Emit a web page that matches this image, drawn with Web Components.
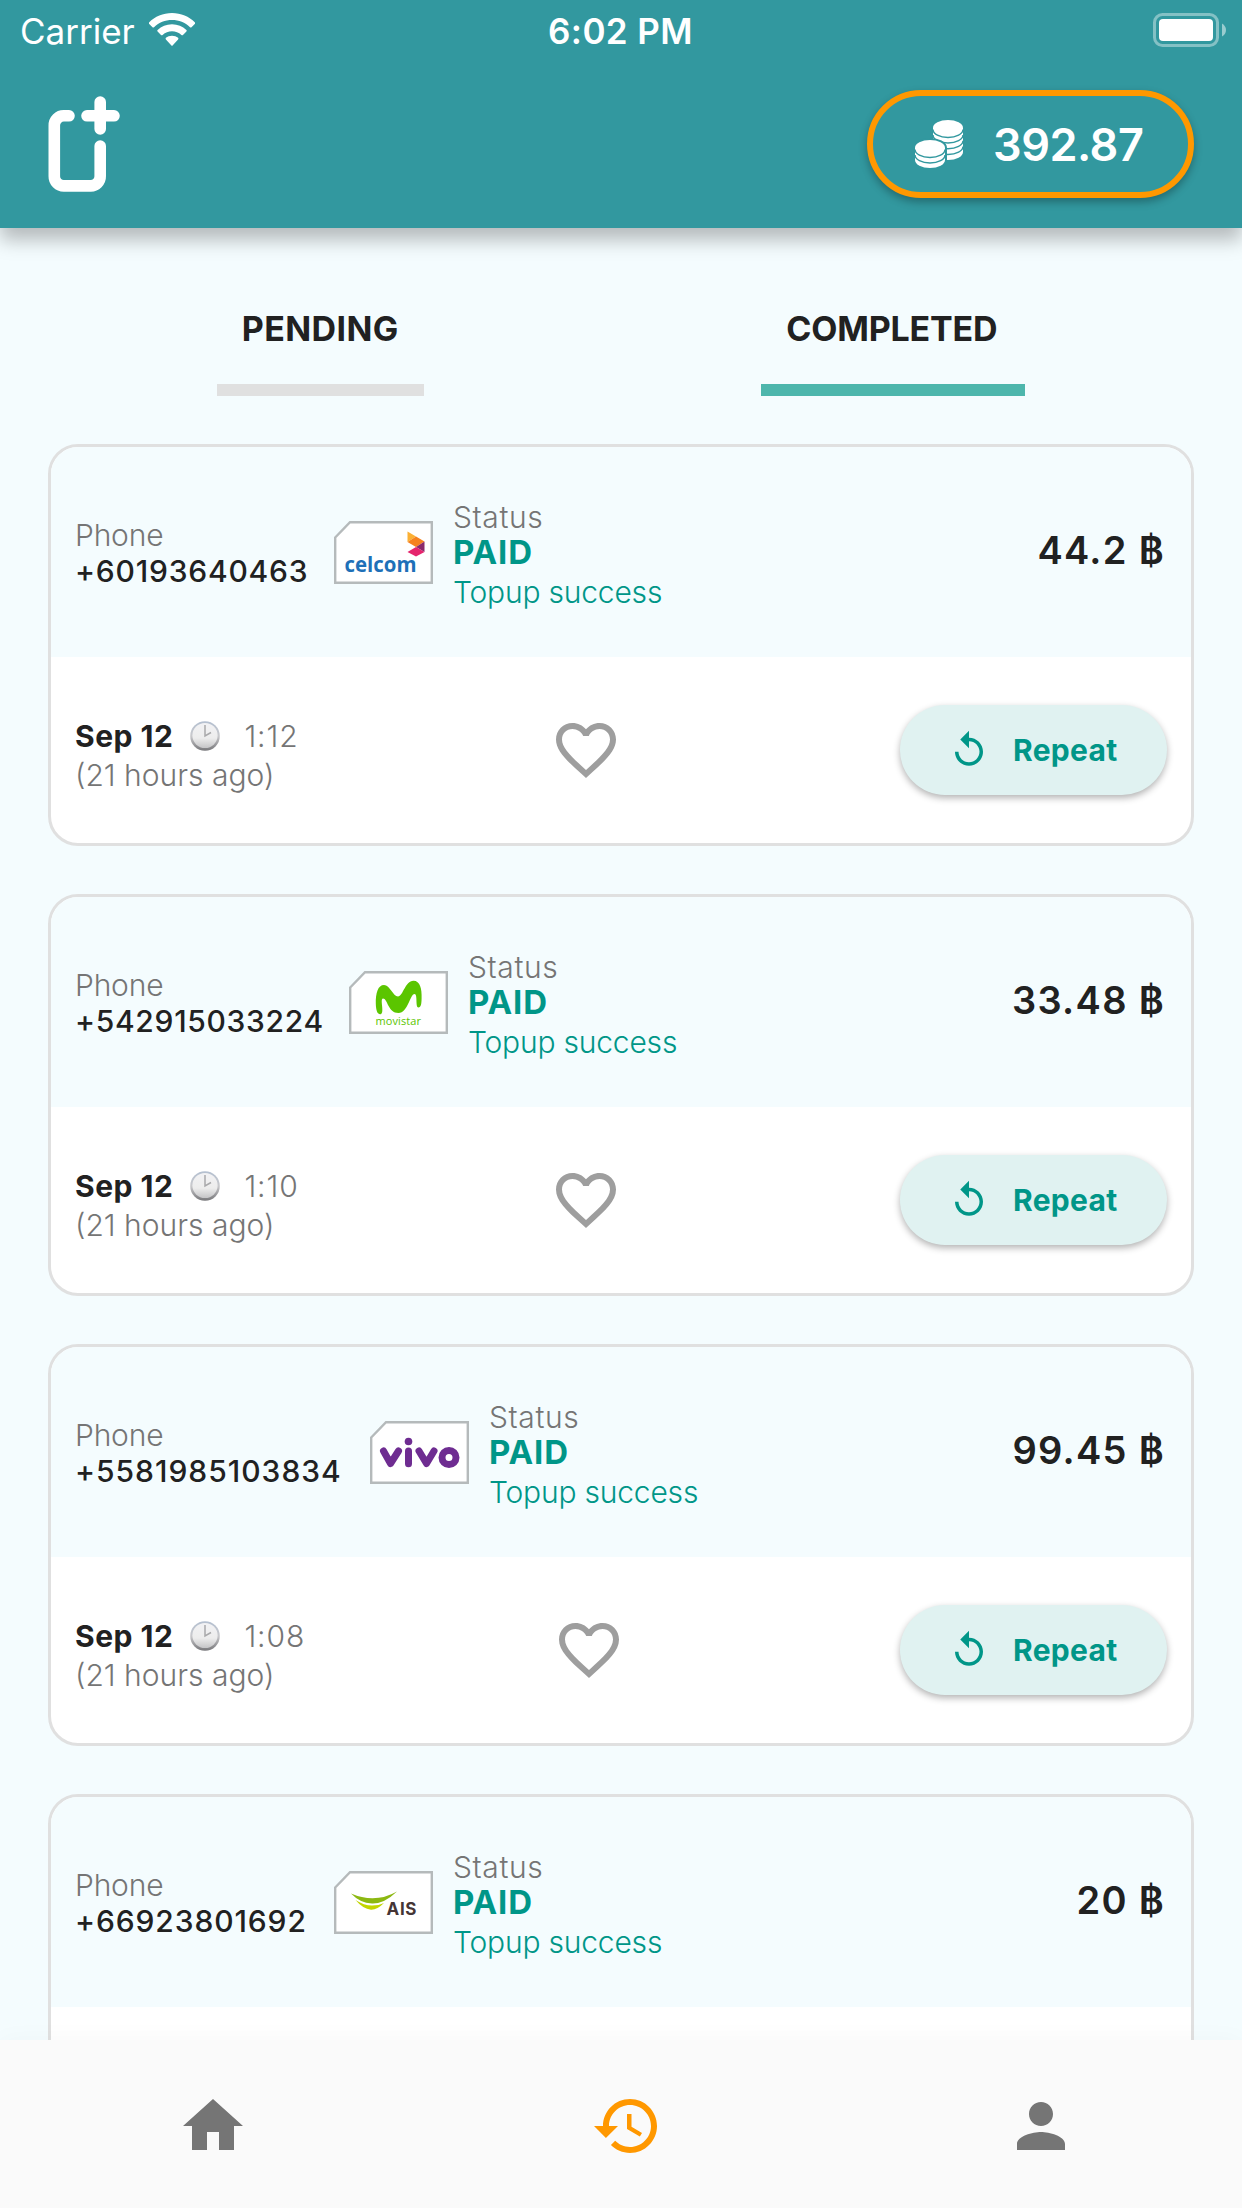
<!DOCTYPE html>
<html lang="en">
<head>
<meta charset="utf-8">
<title>Top-up history</title>
<style>
  html, body {
    margin: 0;
    height: 100%;
  }
  body {
    font-family: Inter, "Liberation Sans", sans-serif;
    color: #212121;
    overflow: hidden;
  }
</style>
</head>
<body>
<topup-app></topup-app>

<script>
class BaseElement extends HTMLElement {
  connectedCallback() {
    this.attachShadow({ mode: "open" }).innerHTML = this.render();
  }
}

class StatusBar extends BaseElement {
  render() {
    return `
      <style>
        :host {
          display: grid;
          grid-template-columns: 1fr auto 1fr;
          align-items: center;
          height: 60px;
          padding: 0 16px 0 20px;
          font-size: 35px;
          color: #fff;
        }
        .left {
          display: flex;
          align-items: center;
          gap: 14px;
        }
        .left span, .time {
          padding-top: 2px;
        }
        .time {
          padding-right: 5px;
          font-weight: 600;
          letter-spacing: 0.4px;
        }
        .battery {
          justify-self: end;
        }
        svg {
          display: block;
        }
      </style>
      <div class="left">
        <span>Carrier</span>
        <svg width="46" height="34" viewBox="0 0 46 34" fill="#fff">
          <path d="M23 0C14 0 6 3.500 0 9.500Q-.5 10.200 0 10.800L3.500 14.200Q4.200 14.800 5 14.200C10 9.400 16 7 23 7S36 9.400 41 14.200Q41.800 14.800 42.500 14.200L46 10.800Q46.500 10.200 46 9.500C40 3.500 32 0 23 0Z"/>
          <path d="M23 11.300C17.300 11.300 12.500 13.400 8.600 17Q7.800 17.800 8.600 18.600L12 22Q12.800 22.700 13.600 22C16.300 19.600 19.500 18.300 23 18.300S29.700 19.600 32.400 22Q33.200 22.700 34 22L37.400 18.600Q38.200 17.800 37.400 17C33.500 13.400 28.700 11.300 23 11.300Z"/>
          <path d="M23 22.700C20.500 22.700 18.500 23.500 16.900 24.800Q16.200 25.600 16.900 26.400L22.200 32.200Q23 33.200 23.800 32.200L29.100 26.400Q29.800 25.600 29.100 24.800C27.500 23.500 25.500 22.700 23 22.700Z"/>
        </svg>
      </div>
      <div class="time">6:02 PM</div>
      <svg class="battery" width="73" height="34" viewBox="0 0 73 34">
        <rect x="1.500" y="1.500" width="63" height="31" rx="8" fill="none" stroke="#fff" stroke-opacity=".4" stroke-width="3"/>
        <rect x="6" y="6" width="54" height="22" rx="4" fill="#fff"/>
        <path d="M69 10.500Q73 13 73 17T69 23.500Z" fill="#fff" fill-opacity=".5"/>
      </svg>
    `;
  }
}

class BalancePill extends BaseElement {
  render() {
    return `
      <style>
        :host {
          box-sizing: border-box;
          display: flex;
          align-items: center;
          width: 327px;
          height: 108px;
          padding-left: 42px;
          border: 6px solid #ff9800;
          border-radius: 54px;
          background: #32989f;
          box-shadow: 0 4px 8px rgba(0, 0, 0, 0.3);
          color: #fff;
          font-size: 45px;
          font-weight: 600;
          letter-spacing: -0.5px;
        }
        svg {
          display: block;
          margin-right: 30px;
        }
        span {
          padding-top: 1px;
        }
      </style>
      <svg width="48" height="48" viewBox="0 0 48 48">
        <path d="M18 8A15 8 0 0 1 48 8V32A15 8 0 0 1 18 32Z" fill="#fff"/>
        <g fill="none" stroke="#32989f" stroke-width="1.500">
          <path d="M18 9.500A15 8 0 0 0 48 9.500M18 15A15 8 0 0 0 48 15M18 20.700A15 8 0 0 0 48 20.700M18 26.400A15 8 0 0 0 48 26.400"/>
        </g>
        <path d="M0 28A15 8 0 0 1 30 28V40A15 8 0 0 1 0 40Z" fill="#fff" stroke="#32989f" stroke-width="4" paint-order="stroke"/>
        <g fill="none" stroke="#32989f" stroke-width="1.500">
          <path d="M0 29.500A15 8 0 0 0 30 29.500M0 35A15 8 0 0 0 30 35"/>
        </g>
      </svg>
      <span><slot></slot></span>
    `;
  }
}

class AppHeader extends BaseElement {
  render() {
    return `
      <style>
        :host {
          display: block;
          position: relative;
          z-index: 1;
          height: 228px;
          background: #32989f;
          box-shadow: 0 12px 18px rgba(0, 0, 0, 0.26);
        }
        .bar {
          display: flex;
          justify-content: space-between;
          align-items: center;
          height: 168px;
          padding: 0 48px;
        }
        svg {
          display: block;
        }
      </style>
      <status-bar></status-bar>
      <div class="bar">
        <svg width="72" height="96" viewBox="0 0 72 96" fill="none" stroke="#fff" stroke-width="11.600" stroke-linecap="round">
          <path d="M21 19.800H16A9.500 9.500 0 0 0 6.300 29.500V80.200A9.500 9.500 0 0 0 16 89.900H42.500A9.500 9.500 0 0 0 52.200 80.200V50"/>
          <path d="M39 19.800H66M52.200 6V33"/>
        </svg>
        <balance-pill>392.87</balance-pill>
      </div>
    `;
  }
}

class HistoryTab extends BaseElement {
  render() {
    return `
      <style>
        :host {
          box-sizing: border-box;
          display: block;
          width: var(--tab-width);
          height: 108px;
          border-bottom: 12px solid #e0e0e0;
          font-size: 34px;
          font-weight: 700;
          line-height: 82px;
          letter-spacing: 0.4px;
          text-align: center;
        }
        :host([active]) {
          border-color: #4db6ac;
          letter-spacing: -0.2px;
          text-indent: -3px;
        }
      </style>
      <slot></slot>
    `;
  }
}

const LOGOS = {
  celcom: `
    <path d="M73.500 10.500V21L82 15.500Z" fill="#fbb034"/>
    <path d="M73.500 21L82 15.500L90.500 20.500L82 26Z" fill="#f58220"/>
    <path d="M90.500 20.500V31L82 26Z" fill="#8a2a6b"/>
    <path d="M73.500 31L82 26L90.500 31L82 35.500Z" fill="#e5256d"/>
    <text x="10.500" y="51" font-family="Open Sans" font-size="21" font-weight="700" fill="#1e70b8" textLength="72" lengthAdjust="spacingAndGlyphs">celcom</text>`,
  movistar: `
    <path d="M26.800 33C26.500 22 29 14 35 14C41 14 44 25.500 49 25.500C54 25.500 56 9.700 64.500 9.700C71 9.700 73 18 72.600 27C72.500 33 72 36.500 69.500 36.500C66 36.500 69 23 65.500 23C61 23 59 42 49.500 42C39 42 38.500 27.500 34 27.500C30.500 27.500 36 42.500 31.500 43.200C28 43.500 27 38.500 26.800 33Z" fill="#5bc500"/>
    <text x="26.500" y="54" font-family="Open Sans" font-size="11" fill="#5bc500" textLength="45.500">movistar</text>`,
  vivo: `
    <g fill="none" stroke="#6e2c91" stroke-width="7" stroke-linecap="round" stroke-linejoin="round">
      <path d="M13.500 30L20.500 42.500L28.500 30M38.500 30V42.700M49 30L56.500 42.500L64 30"/>
      <circle cx="79" cy="36.500" r="7"/>
    </g>
    <circle cx="38.500" cy="20.500" r="3.800" fill="#6e2c91"/>`,
  ais: `
    <path d="M17 22.500Q41 33 63 20.500Q50 33 38 32.500Q26 32 17 22.500Z" fill="#8cb811"/>
    <path d="M21.500 29Q30 34.500 38 34.500Q45 34.500 50 32Q43 39 37 38.700Q29 38 21.500 29Z" fill="#c2d500"/>
    <text x="52.500" y="43.500" font-family="Inter" font-size="17" font-weight="700" fill="#453535" textLength="30">AIS</text>`,
};

class SimLogo extends BaseElement {
  render() {
    return `
      <style>
        :host {
          display: block;
          flex: none;
          width: 99px;
          height: 63px;
        }
        svg {
          display: block;
        }
      </style>
      <svg width="99" height="63" viewBox="0 0 99 63">
        <path d="M1.200 16.500L16 1.200H97.800V61.800H1.200Z" fill="#fff" stroke="#b5babb" stroke-width="2.400"/>
        ${LOGOS[this.getAttribute("operator")]}
      </svg>
    `;
  }
}

class RepeatButton extends BaseElement {
  render() {
    return `
      <style>
        button {
          display: flex;
          align-items: center;
          gap: 23px;
          width: 267px;
          height: 90px;
          padding: 0 0 0 48px;
          border: 0;
          border-radius: 45px;
          background: #e0f2f1;
          box-shadow: 0 3px 7px rgba(0, 0, 0, 0.3);
          color: #009688;
          font: 700 30px Inter, sans-serif;
          letter-spacing: 0.3px;
        }
      </style>
      <button>
        <svg width="42" height="42" viewBox="0 0 24 24" fill="currentColor">
          <path d="M12 5V1L7 6l5 5V7c3.310 0 6 2.690 6 6s-2.690 6-6 6-6-2.690-6-6H4c0 4.420 3.580 8 8 8s8-3.580 8-8-3.580-8-8-8z"/>
        </svg>
        Repeat
      </button>
    `;
  }
}

class TopupCard extends BaseElement {
  render() {
    const get = (name) => this.getAttribute(name);
    return `
      <style>
        :host {
          box-sizing: border-box;
          display: block;
          flex: none;
          height: 402px;
          border: 3px solid #e0e0e0;
          border-radius: 30px;
          background: #fff;
          overflow: hidden;
          font-size: 30px;
        }
        .top, .bottom {
          display: flex;
          align-items: center;
          padding: 0 24px;
        }
        .top {
          height: 210px;
          background: #f4fcfe;
        }
        .bottom {
          justify-content: space-between;
          height: 186px;
        }
        .label, .time, .ago {
          color: #757575;
          font-weight: 300;
        }
        .label {
          line-height: 36px;
        }
        .phone {
          width: var(--phone-width);
          padding-top: 1px;
        }
        .phone .label {
          letter-spacing: -0.2px;
        }
        .number {
          font-weight: 500;
          line-height: 36px;
          letter-spacing: var(--number-spacing);
        }
        .status {
          margin-left: 20px;
          padding-top: 8px;
        }
        .status .label {
          letter-spacing: 0.6px;
        }
        .paid {
          color: #009688;
          font-size: 33px;
          font-weight: 700;
          line-height: 35px;
          letter-spacing: 0.9px;
        }
        .message {
          color: #009688;
          font-weight: 300;
          line-height: 44px;
          letter-spacing: -0.2px;
        }
        .amount {
          margin-left: auto;
          padding: 0 2px 4px 0;
          font-size: 38px;
          font-weight: 600;
          letter-spacing: 1.300px;
        }
        .date {
          padding-top: 11px;
        }
        .day {
          display: flex;
          align-items: center;
          line-height: 40px;
          letter-spacing: 0.9px;
        }
        .day b {
          font-weight: 700;
          letter-spacing: 0.5px;
        }
        .day svg {
          margin: 0 24px 0 17px;
        }
        .ago {
          line-height: 39px;
        }
        .heart {
          display: block;
          padding-right: 27px;
        }
      </style>
      <div class="top">
        <div class="phone">
          <div class="label">Phone</div>
          <div class="number">${get("phone")}</div>
        </div>
        <sim-logo operator="${get("operator")}"></sim-logo>
        <div class="status">
          <div class="label">Status</div>
          <div class="paid">PAID</div>
          <div class="message">Topup success</div>
        </div>
        <div class="amount">${get("amount")} ฿</div>
      </div>
      ${get("time") ? this.renderBottom(get("time")) : ""}
    `;
  }

  renderBottom(time) {
    return `
      <div class="bottom">
        <div class="date">
          <div class="day">
            <b>Sep 12</b>
            <svg width="30" height="30" viewBox="0 0 30 30">
              <defs>
                <linearGradient id="rim" x2="0" y2="1">
                  <stop offset="0" stop-color="#b3bfd0"/>
                  <stop offset=".5" stop-color="#c9c9cc"/>
                  <stop offset="1" stop-color="#77777a"/>
                </linearGradient>
                <linearGradient id="face" x2="0" y2="1">
                  <stop offset="0" stop-color="#f2f2f4"/>
                  <stop offset=".6" stop-color="#ededed"/>
                  <stop offset="1" stop-color="#c4c4c6"/>
                </linearGradient>
              </defs>
              <circle cx="15" cy="15" r="14.800" fill="url(#rim)"/>
              <circle cx="15" cy="14.500" r="12.600" fill="url(#face)"/>
              <path d="M15 4V15L21 11.500" fill="none" stroke="#a9a9ab" stroke-width="1.500"/>
            </svg>
            <span class="time">${time}</span>
          </div>
          <div class="ago">(21 hours ago)</div>
        </div>
        <svg class="heart" width="72" height="72" viewBox="0 0 24 24" fill="#9e9e9e">
          <path d="M16.500 3c-1.740 0-3.410.81-4.500 2.090C10.910 3.810 9.240 3 7.500 3 4.420 3 2 5.420 2 8.500c0 3.780 3.400 6.860 8.550 11.540L12 21.350l1.450-1.320C18.600 15.360 22 12.280 22 8.500 22 5.420 19.580 3 16.500 3zm-4.400 15.550l-.1.100-.1-.1C7.140 14.240 4 11.390 4 8.500 4 6.500 5.500 5 7.500 5c1.540 0 3.040.99 3.570 2.360h1.870C13.460 5.990 14.960 5 16.500 5c2 0 3.500 1.500 3.500 3.500 0 2.890-3.140 5.740-7.900 10.050z"/>
        </svg>
        <repeat-button></repeat-button>
      </div>
    `;
  }
}

class BottomNav extends BaseElement {
  render() {
    return `
      <style>
        :host {
          box-sizing: border-box;
          position: relative;
          z-index: 1;
          display: grid;
          grid-template-columns: repeat(3, 414px);
          justify-items: center;
          align-items: start;
          height: 168px;
          padding: 50px 0 0 6px;
          background: #fafafa;
          box-shadow: 0 0 24px rgba(0, 0, 0, 0.03);
          fill: #757575;
        }
        .active {
          fill: #ff9800;
        }
      </style>
      <svg width="72" height="72" viewBox="0 0 24 24"><path d="M10 20v-6h4v6h5v-8h3L12 3 2 12h3v8z"/></svg>
      <svg class="active" width="72" height="72" viewBox="0 0 24 24"><path d="M13 3c-4.970 0-9 4.030-9 9H1l3.890 3.890.07.140L9 12H6c0-3.870 3.130-7 7-7s7 3.130 7 7-3.130 7-7 7c-1.930 0-3.680-.79-4.940-2.060l-1.420 1.420C8.270 19.990 10.510 21 13 21c4.970 0 9-4.030 9-9s-4.030-9-9-9zm-1 5v5l4.280 2.540.72-1.210-3.500-2.080V8H12z"/></svg>
      <svg width="72" height="72" viewBox="0 0 24 24"><path d="M12 12c2.210 0 4-1.790 4-4s-1.790-4-4-4-4 1.790-4 4 1.790 4 4 4zm0 2c-2.670 0-8 1.340-8 4v2h16v-2c0-2.660-5.330-4-8-4z"/></svg>
    `;
  }
}

class TopupApp extends BaseElement {
  render() {
    return `
      <style>
        :host {
          display: flex;
          flex-direction: column;
          width: 1242px;
          height: 2208px;
          background: #f4fcfe;
          overflow: hidden;
        }
        app-header, bottom-nav {
          flex: none;
        }
        main {
          flex: 1;
          min-height: 0;
          padding: 60px 48px 0;
          overflow: hidden;
        }
        .tabs {
          display: flex;
          justify-content: space-around;
        }
        .cards {
          display: flex;
          flex-direction: column;
          gap: 48px;
          margin-top: 48px;
        }
      </style>
      <app-header></app-header>
      <main>
        <div class="tabs">
          <history-tab style="--tab-width: 207px">PENDING</history-tab>
          <history-tab active style="--tab-width: 264px">COMPLETED</history-tab>
        </div>
        <div class="cards">
          <topup-card phone="+60193640463" operator="celcom" amount="44.2" time="1:12" style="--phone-width: 259px; --number-spacing: 0.8px"></topup-card>
          <topup-card phone="+542915033224" operator="movistar" amount="33.48" time="1:10" style="--phone-width: 274px; --number-spacing: 0.7px"></topup-card>
          <topup-card phone="+5581985103834" operator="vivo" amount="99.45" time="1:08" style="--phone-width: 295px; --number-spacing: 1px"></topup-card>
          <topup-card phone="+66923801692" operator="ais" amount="20" style="--phone-width: 259px; --number-spacing: 0.9px"></topup-card>
        </div>
      </main>
      <bottom-nav></bottom-nav>
    `;
  }
}

customElements.define("status-bar", StatusBar);
customElements.define("balance-pill", BalancePill);
customElements.define("app-header", AppHeader);
customElements.define("history-tab", HistoryTab);
customElements.define("sim-logo", SimLogo);
customElements.define("repeat-button", RepeatButton);
customElements.define("topup-card", TopupCard);
customElements.define("bottom-nav", BottomNav);
customElements.define("topup-app", TopupApp);
</script>
</body>
</html>
